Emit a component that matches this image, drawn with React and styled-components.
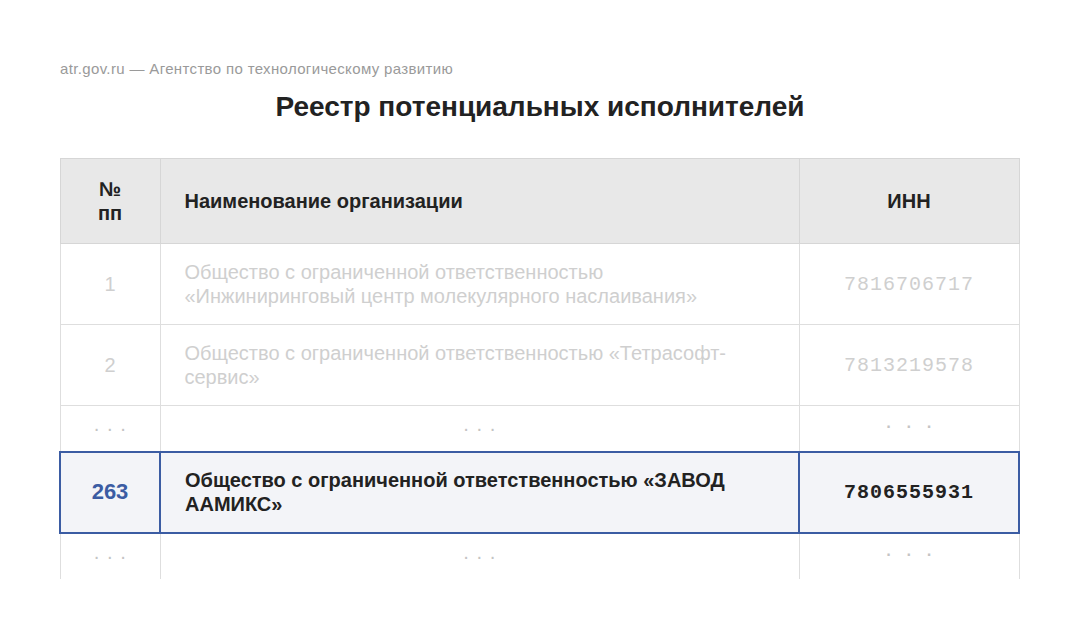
import React from 'react';
import styled, { createGlobalStyle } from 'styled-components';

const GlobalStyle = createGlobalStyle`
  body {
    margin: 0;
    background: #fff;
    font-family: "Liberation Sans", Arial, sans-serif;
  }
`;

const rows = [
  { n: '1', name: 'Общество с ограниченной ответственностью «Инжиниринговый центр молекулярного наслаивания»', inn: '7816706717' },
  { n: '2', name: 'Общество с ограниченной ответственностью «Тетрасофт-сервис»', inn: '7813219578' },
  { gap: true },
  { n: '263', name: 'Общество с ограниченной ответственностью «ЗАВОД ААМИКС»', inn: '7806555931', active: true },
  { gap: true, last: true },
];

export default function App() {
  return (
    <Page>
      <GlobalStyle />
      <Source>atr.gov.ru — Агентство по технологическому развитию</Source>
      <Title>Реестр потенциальных исполнителей</Title>
      <Table>
        <colgroup>
          <col style={{ width: 100 }} />
          <col style={{ width: 639 }} />
          <col style={{ width: 220 }} />
        </colgroup>
        <thead>
          <tr>
            <Th>№<br />пп</Th>
            <Th $left>Наименование организации</Th>
            <Th>ИНН</Th>
          </tr>
        </thead>
        <tbody>
          {rows.map((r, i) =>
            r.gap ? (
              <GapRow key={i} $last={r.last}>
                <Td><Dots>· · ·</Dots></Td>
                <Td><Dots>· · ·</Dots></Td>
                <Td><Dots $mono>· · ·</Dots></Td>
              </GapRow>
            ) : (
              <Row key={i} $active={r.active}>
                <Num $active={r.active}>{r.n}</Num>
                <Name $active={r.active}>{r.name}</Name>
                <Inn $active={r.active}>{r.inn}</Inn>
              </Row>
            )
          )}
        </tbody>
      </Table>
    </Page>
  );
}

const Page = styled.div`
  padding: 60px 60px 0;
`;

const Source = styled.div`
  font-size: 15px;
  color: #9a9a9a;
  letter-spacing: 0.35px;
`;

const Title = styled.h1`
  margin: 14px 0 35px;
  text-align: center;
  font-size: 28px;
  font-weight: 700;
  color: #222;
`;

const Table = styled.table`
  width: 959px;
  margin-left: -1px;
  border-collapse: collapse;
  table-layout: fixed;
`;

const Th = styled.th`
  height: 84px;
  padding: 0 24px;
  background: #e8e8e8;
  border: 1px solid #d6d6d6;
  font-size: 20px;
  font-weight: 700;
  color: #222;
  line-height: 24px;
  text-align: ${p => (p.$left ? 'left' : 'center')};
`;

const Td = styled.td`
  border: 1px solid #dedede;
  text-align: center;
  padding: 0;
`;

const Row = styled.tr`
  height: 81px;
  background: ${p => (p.$active ? '#f3f4f8' : '#fff')};
  & > td {
    border: ${p => (p.$active ? '2px solid #3b5ca3' : '1px solid #dedede')};
  }
`;

const GapRow = styled.tr`
  height: 46px;
  & > td {
    border-bottom: ${p => (p.$last ? 'none' : '1px solid #dedede')};
    border-top: none;
  }
`;

const Num = styled(Td)`
  font-size: ${p => (p.$active ? '22px' : '20px')};
  font-weight: ${p => (p.$active ? 700 : 400)};
  color: ${p => (p.$active ? '#3b5ca3' : '#cfcfcf')};
`;

const Name = styled(Td)`
  text-align: left;
  padding: 0 24px;
  font-size: 20px;
  line-height: 24px;
  font-weight: ${p => (p.$active ? 700 : 400)};
  color: ${p => (p.$active ? '#222' : '#cfcfcf')};
`;

const Inn = styled(Td)`
  font-family: "Liberation Mono", "Courier New", monospace;
  font-size: 20px;
  letter-spacing: 1px;
  font-weight: ${p => (p.$active ? 700 : 400)};
  color: ${p => (p.$active ? '#222' : '#cfcfcf')};
`;

const Dots = styled.span`
  display: inline-block;
  font-family: ${p => (p.$mono ? '"Liberation Mono", monospace' : '"Liberation Sans", sans-serif')};
  font-size: ${p => (p.$mono ? '16px' : '20px')};
  font-weight: ${p => (p.$mono ? 700 : 400)};
  color: #c4c4c4;
  letter-spacing: 0.5px;
  transform: translateY(${p => (p.$mono ? '-2px' : '0')});
`;
